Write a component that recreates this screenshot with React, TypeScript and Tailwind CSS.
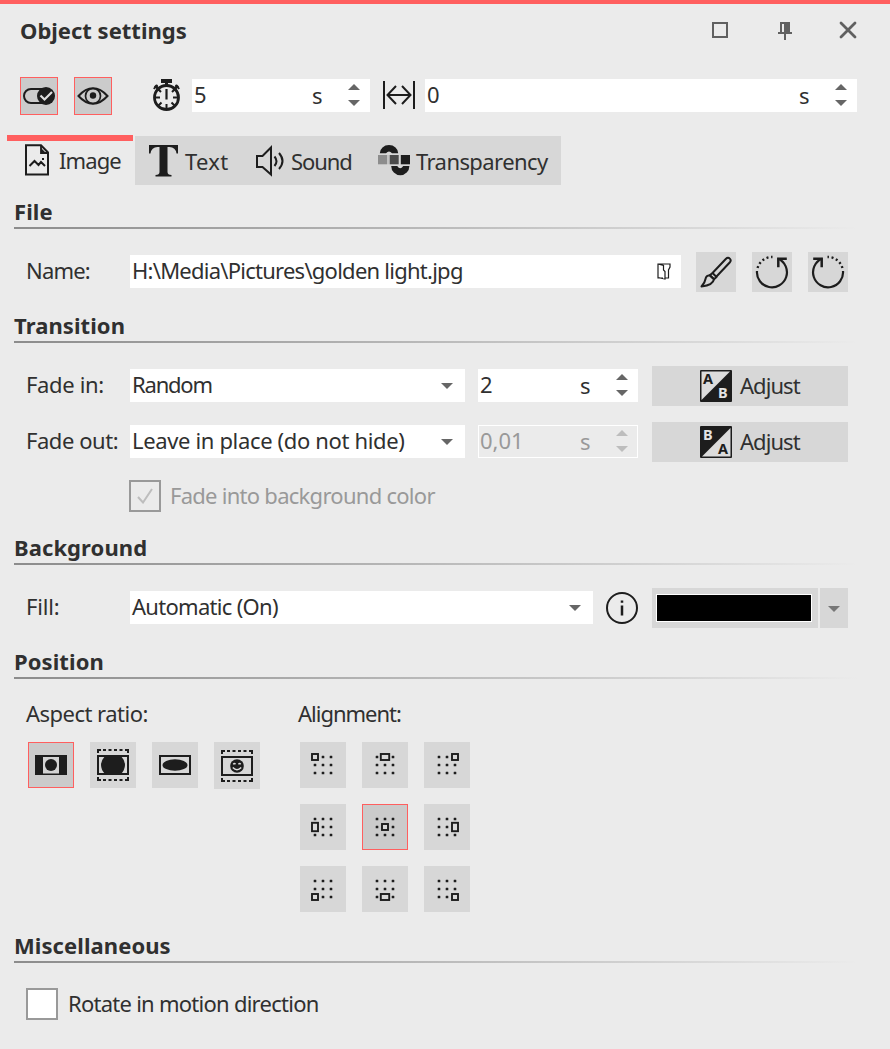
import React from "react";

const INK = "#1d1d1d";

function Caret({ up = false, className = "" }: { up?: boolean; className?: string }) {
  return (
    <svg width="12" height="6" viewBox="0 0 12 6" className={`block shrink-0 ${className}`}>
      <path d={up ? "M6 0L12 6H0Z" : "M0 0H12L6 6Z"} fill="currentColor" />
    </svg>
  );
}

function Spinner({ className = "" }: { className?: string }) {
  return (
    <div className={`flex shrink-0 flex-col gap-[10px] ${className}`}>
      <Caret up />
      <Caret />
    </div>
  );
}

function NumberField({ value, className, unitClass, disabled = false }: { value: string; className: string; unitClass: string; disabled?: boolean }) {
  return (
    <div className={`flex h-[33px] shrink-0 ${disabled ? "border border-white text-[#999999]" : "bg-white"} ${className}`}>
      <span className={`flex-1 ${disabled ? "leading-[29px]" : "leading-[31px]"}`}>{value}</span>
      <span className={`w-[36px] ${unitClass}`}>s</span>
      <Spinner className={disabled ? "mt-1 mr-[9px] text-[#bdbdbd]" : "mt-[5px] mr-[10px] text-[#666666]"} />
    </div>
  );
}

function Select({ value, className }: { value: React.ReactNode; className: string }) {
  return (
    <div className={`mt-[3px] flex h-[33px] shrink-0 bg-white pr-3 pl-[2px] ${className}`}>
      <span className="flex-1 leading-[31px]">{value}</span>
      <Caret className="mt-[14px] text-[#666666]" />
    </div>
  );
}

function Heading({ children, className = "" }: { children: React.ReactNode; className?: string }) {
  return (
    <div className={`ml-[14px] w-[844px] ${className}`}>
      <h2 className="h-[30px] font-bold leading-[29px] tracking-[0.08px]">{children}</h2>
      <div className="h-[2px] bg-linear-to-r from-[#8c8c8c] to-[#ebebeb]" />
    </div>
  );
}

function Label({ children, className = "" }: { children: React.ReactNode; className?: string }) {
  return <span className={`w-[104px] shrink-0 leading-[37px] ${className}`}>{children}</span>;
}

function ToolButton({ children, className = "", active = false }: { children: React.ReactNode; className?: string; active?: boolean }) {
  return (
    <button className={`flex shrink-0 items-center justify-center ${active ? "border border-[#ff5f5f] bg-[#cbcbcb]" : "bg-[#d7d7d7]"} ${className}`}>
      {children}
    </button>
  );
}

function ToggleIcon() {
  return (
    <svg width="34" height="20" viewBox="0 0 34 20">
      <rect x="2" y="3" width="28" height="14" rx="7" fill="none" stroke={INK} strokeWidth="2" />
      <circle cx="24" cy="10" r="9" fill={INK} />
      <path d="M18.5 9.5L22.5 13.5L30 6" fill="none" stroke="#dedede" strokeWidth="2.2" />
    </svg>
  );
}

function EyeIcon() {
  return (
    <svg width="32" height="20" viewBox="0 0 32 20" fill="none" stroke={INK} strokeWidth="2">
      <path d="M1.5 10C6 5 10.500 2.300 16 2.300S26 5 30.500 10C26 15 21.500 17.700 16 17.700S6 15 1.500 10Z" />
      <circle cx="16" cy="10" r="7.500" strokeWidth="1.700" />
      <circle cx="16" cy="9.500" r="3.200" fill={INK} stroke="none" />
    </svg>
  );
}

function StopwatchIcon() {
  return (
    <svg width="30" height="34" viewBox="0 0 30 34" className="shrink-0" fill="none" stroke={INK}>
      <path d="M9 1h11v4H9Z" fill={INK} stroke="none" />
      <path d="M14.500 4v4M3 7.500l4.500 4.500M26 7.500L21.500 12" strokeWidth="3" />
      <path d="M1.700 10.800L5.500 7M27.300 10.800L23.500 7" strokeWidth="1.800" />
      <circle cx="14.500" cy="19.500" r="12" strokeWidth="2.800" />
      <path d="M14.500 11v10.500" strokeWidth="2.200" />
      <path d="M3 19.500h5M21 19.500h5M14.500 26v5M6.500 27.500l3-3M22.500 27.500l-3-3M6.500 11.500l2.500 2.500M22.500 11.500L20 14" strokeWidth="2" />
    </svg>
  );
}

function DistanceIcon() {
  return (
    <svg width="32" height="30" viewBox="0 0 32 30" className="shrink-0" fill="none" stroke={INK} strokeWidth="2">
      <path d="M1 1v28M31 1v28M4.500 15h23M13 6L4.500 15l8.500 9M19 6l8.500 9-8.500 9" />
    </svg>
  );
}

function ImageIcon() {
  return (
    <svg width="24" height="32" viewBox="0 0 24 32" fill="none" stroke={INK} strokeWidth="2">
      <path d="M1 1.200H16L23 8.500V30.500H1Z" />
      <path d="M16 1.200V9H23" strokeWidth="1.800" />
      <path d="M16 4L20 8H16Z" fill={INK} stroke="none" />
      <path d="M4.500 22L9.500 17l4 4 2.500-3 4 4" />
      <rect x="17" y="14" width="2" height="2" fill={INK} stroke="none" />
    </svg>
  );
}

function SpeakerIcon() {
  return (
    <svg width="30" height="32" viewBox="0 0 30 32" fill="none" stroke={INK} strokeWidth="2">
      <path d="M2 11h5.500l8.500-8.500v27L7.500 22H2Z" />
      <path d="M19.500 11.500q4 4.800 0 9.500M24 8q7 8 0 16" />
    </svg>
  );
}

function TransparencyIcon() {
  return (
    <svg width="34" height="32" viewBox="0 0 34 32">
      <path d="M1.800 8.300a9.200 8.300 0 0 1 18.400 0h-6.200q-3-3.800-6 0Z" fill={INK} />
      <path d="M13.200 21h6q3 4.500 6 0h6.200a9.100 9.200 0 0 1-18.200 0Z" fill={INK} />
      <path d="M0 10h9v9.300H0Z" fill="#8d8d8d" />
      <path d="M9 10h2.500v9.300H9Z" fill="#c3c3c3" />
      <path d="M11.700 10h9v9.300h-9Z" fill="#4b4b4b" />
      <path d="M22.800 10h9.200v9.300h-9.200Z" fill={INK} />
    </svg>
  );
}

function FolderIcon() {
  return (
    <svg width="14" height="17" viewBox="0 0 14 17" className="mt-2 shrink-0" fill="none" stroke={INK} strokeWidth="1.200">
      <path d="M6 1H1v14h5M6 1h7v3l-1.500 3v8H8M1 1l5.500 1.500v4.500L8 8.500V16l-7-1.500" />
    </svg>
  );
}

function BrushIcon() {
  return (
    <svg width="32" height="32" viewBox="0 0 32 32" fill="none" stroke={INK} strokeWidth="2" strokeLinejoin="round">
      <path d="M12.500 17L26 2.800q2-2 3.800-.2t-.1 3.900L16.500 20.500" />
      <path d="M12.500 17l4 4-2.500 2.300-4.200-4Z" />
      <path d="M9.800 19.200l4.200 4q-.8 6-12.500 7.300Q5 26.500 5.500 23t4.300-3.800Z" />
    </svg>
  );
}

function RotateIcon({ flip = false }: { flip?: boolean }) {
  return (
    <svg width="34" height="34" viewBox="0 0 34 34" fill="none" stroke={INK} strokeWidth="2.200" className={`shrink-0 ${flip ? "-scale-x-100" : ""}`}>
      <path d="M2 16A15 15 0 1 0 23.300 3.700" />
      <path d="M23.300 12.200V3.700h8.500" strokeWidth="2.500" />
      <path d="M2.600 13A15 15 0 0 1 17.500 2" strokeWidth="2.400" strokeDasharray="2 2.600" />
    </svg>
  );
}

function AbIcon({ swap = false }: { swap?: boolean }) {
  return (
    <svg width="32" height="32" viewBox="0 0 32 32" className="shrink-0 overflow-visible font-['Noto_Sans'] text-[14.5px] font-bold tracking-normal">
      <rect width="32" height="32" rx="1" fill={INK} />
      <path d={swap ? "M30.500 2v28.500H2Z" : "M1.500 1.500H30L1.500 30Z"} fill="#dcdcdc" />
      <text x="3" y="14" fill={swap ? "#e4e4e4" : INK}>{swap ? "B" : "A"}</text>
      <text x="18" y="28" fill={swap ? INK : "#e4e4e4"}>{swap ? "A" : "B"}</text>
    </svg>
  );
}

function InfoIcon() {
  return (
    <svg width="32" height="32" viewBox="0 0 32 32" className="mt-1 ml-[13px] shrink-0" fill="none" stroke={INK}>
      <circle cx="16" cy="16" r="15" strokeWidth="2" />
      <path d="M16 13.500v10M16 8.500v2.200" strokeWidth="2.500" />
    </svg>
  );
}

function AspectIcon({ kind }: { kind: "fit" | "cover" | "stretch" | "original" }) {
  if (kind === "fit") {
    return (
      <svg width="32" height="32" viewBox="0 0 32 32">
        <path d="M0 6h32v20H0Z" fill={INK} />
        <path d="M8 8h16v16.500H8Z" fill="#d3d3d3" />
        <circle cx="16" cy="16" r="6" fill={INK} />
      </svg>
    );
  }
  const dashed = kind !== "stretch";
  return (
    <svg width="32" height="34" viewBox="0 0 32 34" fill="none" stroke={INK}>
      {dashed && (
        <path d="M0 2h4M6 2h3M11.500 2h3M17 2h3M22.500 2h3M28 2h4M1 2v3M31 2v3M0 32h4M6 32h3M11.500 32h3M17 32h3M22.500 32h3M28 32h4M1 29v3M31 29v3" strokeWidth="2" />
      )}
      <path d="M1 8h30v18H1Z" strokeWidth="2" />
      {kind === "cover" && <path d="M8 8h16q8 9 0 18H8q-8-9 0-18Z" fill={INK} strokeWidth="0" />}
      {kind === "stretch" && <ellipse cx="16" cy="17" rx="12.500" ry="5.700" fill={INK} stroke="none" />}
      {kind === "original" && (
        <>
          <circle cx="16" cy="17" r="6.800" fill={INK} stroke="none" />
          <path d="M12.300 15.300q1-1.500 2.200 0M17.500 15.300q1-1.500 2.200 0" stroke="#dddddd" strokeWidth="1.400" />
          <path d="M11.800 18.500q4.200 4.500 8.400 0" stroke="#dddddd" strokeWidth="1.500" />
        </>
      )}
    </svg>
  );
}

const STOPS = [0, 1, 2];

function AlignIcon({ col, row }: { col: number; row: number }) {
  const w = col === 1 && row !== 1 ? 8.4 : 6;
  const h = row === 1 && col !== 1 ? 8.4 : 6;
  const cx = 8 + col * 8;
  const cy = 8 + row * 8;
  return (
    <svg width="32" height="32" viewBox="0 0 32 32">
      {STOPS.map((r) =>
        STOPS.map((c) =>
          c === col && r === row ? null : (
            <rect key={`${c}${r}`} x={6.7 + c * 8} y={6.7 + r * 8} width="2.600" height="2.600" rx=".4" fill={INK} />
          ),
        ),
      )}
      <rect x={cx - w / 2} y={cy - h / 2} width={w} height={h} fill="#dadada" stroke={INK} strokeWidth="1.900" />
    </svg>
  );
}

export default function App() {
  return (
    <main className="h-[1049px] w-[890px] overflow-hidden border-t-4 border-[#ff5f5f] bg-[#ebebeb] font-['Noto_Sans',sans-serif] text-[22px] whitespace-nowrap text-[#303030]">
      <header className="flex h-[73px] pl-5">
        <h1 className="w-[691px] pt-3 font-bold leading-[29px]">Object settings</h1>
        <svg width="18" height="18" viewBox="0 0 18 18" className="mt-[17px]">
          <path d="M2 2h14v14H2Z" fill="none" stroke="#606060" strokeWidth="2" />
        </svg>
        <svg width="14" height="18" viewBox="0 0 14 18" className="mt-[18px] ml-[49px]" fill="#606060">
          <path d="M2 0h10v10h2v2H8v6H6v-6H0v-2h2ZM4 2v8h2V2Z" fillRule="evenodd" />
        </svg>
        <svg width="18" height="18" viewBox="0 0 18 18" className="mt-[17px] ml-[47px]">
          <path d="M2 2L16 16M16 2L2 16" stroke="#606060" strokeWidth="2.800" strokeLinecap="round" />
        </svg>
      </header>

      <div className="flex h-[58px] items-start pl-5">
        <ToolButton active className="size-[38px]"><ToggleIcon /></ToolButton>
        <ToolButton active className="ml-4 size-[38px]"><EyeIcon /></ToolButton>
        <div className="mt-px ml-10"><StopwatchIcon /></div>
        <NumberField value="5" className="mt-[2px] ml-[10px] w-[178px] pl-[2px]" unitClass="leading-[33px]" />
        <div className="mt-[3px] ml-[13px]"><DistanceIcon /></div>
        <NumberField value="0" className="mt-[2px] ml-[10px] w-[432px] pl-[2px]" unitClass="leading-[33px]" />
      </div>

      <nav className="flex h-[50px] pl-[7px]">
        <div className="flex h-[50px] w-[126px] border-t-[6px] border-[#ff5f5f] pl-[18px]">
          <div className="mt-[3px]"><ImageIcon /></div>
          <span className="ml-[10px] leading-[39px] tracking-[-0.9px]">Image</span>
        </div>
        <div className="mt-px ml-[2px] flex h-[49px] w-[426px] bg-[#d7d7d7] leading-[51px]">
          <svg width="29" height="32" viewBox="0 0 29 32" className="mt-[9px] ml-[14px]">
            <path d="M0 0H29V8.500H27.500Q26.500 2 20.500 2H18.500V27Q18.500 30 22.500 30V31.500H6.500V30Q10.500 30 10.500 27V2H8.500Q2.500 2 1.500 8.500H0Z" fill={INK} />
          </svg>
          <span className="ml-[7px] w-[70px] tracking-[0.3px]">Text</span>
          <div className="mt-[9px]"><SpeakerIcon /></div>
          <span className="ml-[6px] w-[87px] tracking-[-1.1px]">Sound</span>
          <div className="mt-[9px] shrink-0"><TransparencyIcon /></div>
          <span className="ml-1 tracking-[-0.58px]">Transparency</span>
        </div>
      </nav>

      <Heading className="mt-3">File</Heading>
      <div className="mt-[23px] flex h-10 pl-[26px]">
        <Label className="tracking-[-0.8px]">Name:</Label>
        <div className="mt-[3px] flex h-[33px] w-[551px] bg-white pl-[2px]">
          <span className="flex-1 leading-[31px] tracking-[-0.75px]">H:\Media\Pictures\golden light.jpg</span>
          <div className="mr-[10px]"><FolderIcon /></div>
        </div>
        <ToolButton className="ml-[15px] size-10"><BrushIcon /></ToolButton>
        <ToolButton className="ml-4 size-10"><RotateIcon /></ToolButton>
        <ToolButton className="ml-4 size-10"><RotateIcon flip /></ToolButton>
      </div>

      <Heading className="mt-[19px]">Transition</Heading>
      <div className="mt-[23px] flex h-10 pl-[26px]">
        <Label className="tracking-[-0.35px]">Fade in:</Label>
        <Select value="Random" className="w-[335px] tracking-[-1.2px]" />
        <NumberField value="2" className="mt-[3px] ml-[13px] w-[160px] pl-[2px]" unitClass="leading-[32px]" />
        <ToolButton className="ml-[14px] h-10 w-[196px] gap-2"><AbIcon /><span className="h-10 w-[60px] text-left leading-[39px] tracking-[-0.95px]">Adjust</span></ToolButton>
      </div>
      <div className="mt-4 flex h-10 pl-[26px]">
        <Label className="tracking-[-0.45px]">Fade out:</Label>
        <Select value="Leave in place (do not hide)" className="w-[335px] tracking-[-0.35px]" />
        <NumberField disabled value="0,01" className="mt-[3px] ml-[13px] w-[160px] pl-px" unitClass="leading-[31px]" />
        <ToolButton className="ml-[14px] h-10 w-[196px] gap-2"><AbIcon swap /><span className="h-10 w-[60px] text-left leading-[39px] tracking-[-0.95px]">Adjust</span></ToolButton>
      </div>
      <div className="mt-[18px] flex h-8 pl-[129px] text-[#999999]">
        <div className="flex size-8 items-center justify-center border-2 border-[#999999]">
          <svg width="16" height="16" viewBox="0 0 16 16">
            <path d="M1 9l5 5.500L15 1" fill="none" stroke="#bdbdbd" strokeWidth="2" />
          </svg>
        </div>
        <span className="ml-[9px] leading-[31px] tracking-[-0.73px]">Fade into background color</span>
      </div>

      <Heading className="mt-[21px]">Background</Heading>
      <div className="mt-[23px] flex h-10 pl-[26px]">
        <Label className="tracking-[-0.2px]">Fill:</Label>
        <Select value="Automatic (On)" className="w-[463px] tracking-[-0.7px]" />
        <InfoIcon />
        <ToolButton className="ml-[14px] h-10 w-[166px] pr-[2px]">
          <span className="h-7 w-[156px] border border-white bg-black" />
        </ToolButton>
        <ToolButton className="ml-[2px] h-10 w-7 pt-[2px] text-[#777777]"><Caret /></ToolButton>
      </div>

      <Heading className="mt-[19px]">Position</Heading>
      <div className="flex h-[233px] pt-[21px] pl-[26px]">
        <div className="w-[272px]">
          <div className="h-[42px] leading-[27px] tracking-[-0.52px]">Aspect ratio:</div>
          <div className="flex gap-4 pl-[2px]">
            <ToolButton active className="size-[46px]"><AspectIcon kind="fit" /></ToolButton>
            <ToolButton className="size-[46px]"><AspectIcon kind="cover" /></ToolButton>
            <ToolButton className="size-[46px]"><AspectIcon kind="stretch" /></ToolButton>
            <ToolButton className="h-[47px] w-[46px] pt-px"><AspectIcon kind="original" /></ToolButton>
          </div>
        </div>
        <div>
          <div className="h-[42px] leading-[27px] tracking-[-1px]">Alignment:</div>
          <div className="grid grid-cols-3 gap-4 pl-[2px]">
            {STOPS.map((r) =>
              STOPS.map((c) => (
                <ToolButton key={`${c}${r}`} active={c === 1 && r === 1} className="size-[46px]">
                  <AlignIcon col={c} row={r} />
                </ToolButton>
              )),
            )}
          </div>
        </div>
      </div>

      <Heading className="mt-[19px]">Miscellaneous</Heading>
      <div className="mt-[25px] flex h-8 pl-[26px]">
        <div className="size-8 border-2 border-[#999999] bg-white" />
        <span className="ml-[10px] leading-[31px] tracking-[-0.74px]">Rotate in motion direction</span>
      </div>
    </main>
  );
}
